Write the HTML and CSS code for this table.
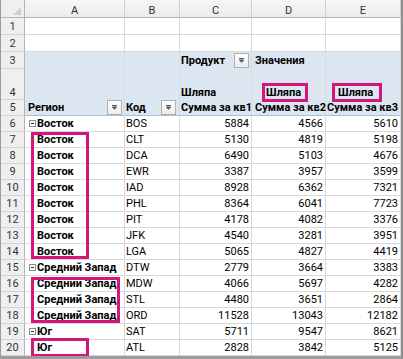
FILE: index.html
```html
<!DOCTYPE html>
<html lang="ru">
<head>
<meta charset="utf-8">
<link rel="stylesheet" href="styles.css">
</head>
<body>
<div class="sheet">
  <div class="corner"><svg width="8" height="8" viewBox="0 0 8 8"><polygon points="8,0 8,8 0,8" fill="#cfcfcf"/></svg></div>
  <div class="ch">A</div><div class="ch">B</div><div class="ch">C</div><div class="ch">D</div><div class="ch">E</div>

  <div class="rh">1</div><div class="c"></div><div class="c"></div><div class="c"></div><div class="c"></div><div class="c"></div>
  <div class="rh">2</div><div class="c"></div><div class="c"></div><div class="c"></div><div class="c"></div><div class="c"></div>

  <div class="rh">3</div><div class="c pv"></div><div class="c pv"></div>
  <div class="c pv b pl1">Продукт<span class="drop"><svg width="7" height="5" viewBox="0 0 7 5"><path d="M1 0.5h5M1.5 2h4L3.5 4.3z" stroke="#555" stroke-width="1" fill="#555"/></svg></span></div>
  <div class="c pv b pl3">Значения</div><div class="c pv"></div>

  <div class="rh r4">4</div><div class="c pv r4"></div><div class="c pv r4"></div>
  <div class="c pv r4 b pl1">Шляпа</div><div class="c pv r4 b sd">Шляпа</div><div class="c pv r4 b se">Шляпа</div>

  <div class="rh">5</div>
  <div class="c pv ph b pl3">Регион<span class="drop"><svg width="7" height="5" viewBox="0 0 7 5"><path d="M1 0.5h5M1.5 2h4L3.5 4.3z" stroke="#555" stroke-width="1" fill="#555"/></svg></span></div>
  <div class="c pv ph b pl1">Код<span class="drop dr2"><svg width="7" height="5" viewBox="0 0 7 5"><path d="M1 0.5h5M1.5 2h4L3.5 4.3z" stroke="#555" stroke-width="1" fill="#555"/></svg></span></div>
  <div class="c pv ph b pl1">Сумма за кв1</div><div class="c pv ph b pl3">Сумма за кв2</div><div class="c pv ph b pl1">Сумма за кв3</div>

  <div class="rh">6</div><div class="c b grp"><span class="tog"><svg width="7" height="7" viewBox="0 0 7 7"><rect x="0.5" y="0.5" width="6" height="6" fill="#fff" stroke="#8c8c8c"/><path d="M2 3.5h3" stroke="#333"/></svg></span>Восток</div><div class="c code">BOS</div><div class="c num">5884</div><div class="c num">4566</div><div class="c num">5610</div>
  <div class="rh">7</div><div class="c b lbl">Восток</div><div class="c code">CLT</div><div class="c num">5130</div><div class="c num">4819</div><div class="c num">5198</div>
  <div class="rh">8</div><div class="c b lbl">Восток</div><div class="c code">DCA</div><div class="c num">6490</div><div class="c num">5103</div><div class="c num">4676</div>
  <div class="rh">9</div><div class="c b lbl">Восток</div><div class="c code">EWR</div><div class="c num">3387</div><div class="c num">3957</div><div class="c num">3599</div>
  <div class="rh">10</div><div class="c b lbl">Восток</div><div class="c code">IAD</div><div class="c num">8928</div><div class="c num">6362</div><div class="c num">7321</div>
  <div class="rh">11</div><div class="c b lbl">Восток</div><div class="c code">PHL</div><div class="c num">8364</div><div class="c num">6041</div><div class="c num">7723</div>
  <div class="rh">12</div><div class="c b lbl">Восток</div><div class="c code">PIT</div><div class="c num">4178</div><div class="c num">4082</div><div class="c num">3376</div>
  <div class="rh">13</div><div class="c b lbl">Восток</div><div class="c code">JFK</div><div class="c num">4540</div><div class="c num">3281</div><div class="c num">3951</div>
  <div class="rh">14</div><div class="c b lbl">Восток</div><div class="c code">LGA</div><div class="c num">5065</div><div class="c num">4827</div><div class="c num">4419</div>
  <div class="rh">15</div><div class="c b grp"><span class="tog"><svg width="7" height="7" viewBox="0 0 7 7"><rect x="0.5" y="0.5" width="6" height="6" fill="#fff" stroke="#8c8c8c"/><path d="M2 3.5h3" stroke="#333"/></svg></span>Средний Запад</div><div class="c code">DTW</div><div class="c num">2779</div><div class="c num">3664</div><div class="c num">3383</div>
  <div class="rh">16</div><div class="c b lbl">Средний Запад</div><div class="c code">MDW</div><div class="c num">4066</div><div class="c num">5697</div><div class="c num">4282</div>
  <div class="rh">17</div><div class="c b lbl">Средний Запад</div><div class="c code">STL</div><div class="c num">4480</div><div class="c num">3651</div><div class="c num">2864</div>
  <div class="rh">18</div><div class="c b lbl">Средний Запад</div><div class="c code">ORD</div><div class="c num">11528</div><div class="c num">13043</div><div class="c num">12182</div>
  <div class="rh">19</div><div class="c b grp"><span class="tog"><svg width="7" height="7" viewBox="0 0 7 7"><rect x="0.5" y="0.5" width="6" height="6" fill="#fff" stroke="#8c8c8c"/><path d="M2 3.5h3" stroke="#333"/></svg></span>Юг</div><div class="c code">SAT</div><div class="c num">5711</div><div class="c num">9547</div><div class="c num">8621</div>
  <div class="rh">20</div><div class="c b lbl">Юг</div><div class="c code">ATL</div><div class="c num">2828</div><div class="c num">3842</div><div class="c num">5125</div>

  <div class="box bx-d4"></div>
  <div class="box bx-e4"></div>
  <div class="box bx-east"></div>
  <div class="box bx-mid"></div>
  <div class="box bx-south"></div>
</div>
</body>
</html>
```
FILE: styles.css
```css
html, body {
  margin: 0;
  padding: 0;
  background: #ffffff;
}

.sheet {
  position: relative;
  width: 403px;
  height: 359px;
  box-sizing: border-box;
  border-left: 1px solid #9c9c9c;
  border-right: 2px solid #8e8e8e;
  border-bottom: 3px solid #9c9c9c;
  overflow: hidden;
  display: grid;
  grid-template-columns: 24px 100px 55px 72px 74px 75px;
  grid-template-rows: 18px 17px 17px 17px 31px 16px repeat(15, 16px);
  font-family: Roboto, "Noto Sans", sans-serif;
  font-size: 11px;
  color: #000;
}

.sheet > div {
  box-sizing: border-box;
  white-space: nowrap;
}

.corner {
  background: #efefef;
  border-right: 1px solid #b4b4b4;
  border-bottom: 1px solid #b4b4b4;
  display: flex;
  align-items: flex-end;
  justify-content: flex-end;
  padding: 0 3px 2px 0;
}

.corner svg { display: block; }

.ch {
  background: linear-gradient(#f6f6f6, #ececec);
  border-right: 1px solid #cfcfcf;
  border-bottom: 1px solid #b4b4b4;
  color: #333;
  font-size: 11px;
  line-height: 15px;
  padding-top: 3px;
  text-align: center;
}

.rh {
  background: #efefef;
  border-right: 1px solid #b4b4b4;
  border-bottom: 1px solid #d2d2d2;
  color: #333;
  font-size: 11px;
  line-height: 15px;
  display: flex;
  align-items: center;
  justify-content: center;
}

.c {
  border-right: 1px solid #d9d9d9;
  border-bottom: 1px solid #d9d9d9;
  line-height: 15px;
  display: flex;
  align-items: center;
  padding: 0 2px;
  overflow: visible;
}

.pv {
  background: #dce6f1;
  border-right-color: #d3ddea;
  border-bottom-color: #dce6f1;
}

.ph {
  border-bottom-color: #a9bfd9;
}

.r4 {
  align-items: flex-end;
  padding-bottom: 0;
  line-height: 13px;
}

.b { font-weight: 700; }

.pl1 { padding-left: 1px; }
.pl3 { padding-left: 3px; }

.sd { padding-left: 14px; }
.se { padding-left: 12px; }

.grp { padding-left: 4px; }
.lbl { padding-left: 12px; }

.tog {
  display: inline-flex;
  width: 7px;
  height: 7px;
  margin-right: 1px;
}
.tog svg { display: block; }

.code { padding-left: 1px; }

.num {
  justify-content: flex-end;
  padding-right: 2px;
}

.drop {
  margin-left: auto;
  width: 15px;
  height: 15px;
  box-sizing: border-box;
  border: 1px solid #b0b0b0;
  background: linear-gradient(#fdfdfd, #ececec);
  display: flex;
  align-items: center;
  justify-content: center;
  align-self: center;
}
.drop svg { display: block; }
.dr2 { margin-right: 1px; }

.box {
  position: absolute;
  box-sizing: border-box;
  border: 3px solid #d3157c;
}

.bx-d4 { left: 261px; top: 83px; width: 46px; height: 19px; }
.bx-e4 { left: 331px; top: 83px; width: 50px; height: 19px; }
.bx-east { left: 30px; top: 132px; width: 58px; height: 127px; }
.bx-mid { left: 30px; top: 277px; width: 89px; height: 46px; }
.bx-south { left: 30px; top: 338px; width: 58px; height: 19px; }
```
